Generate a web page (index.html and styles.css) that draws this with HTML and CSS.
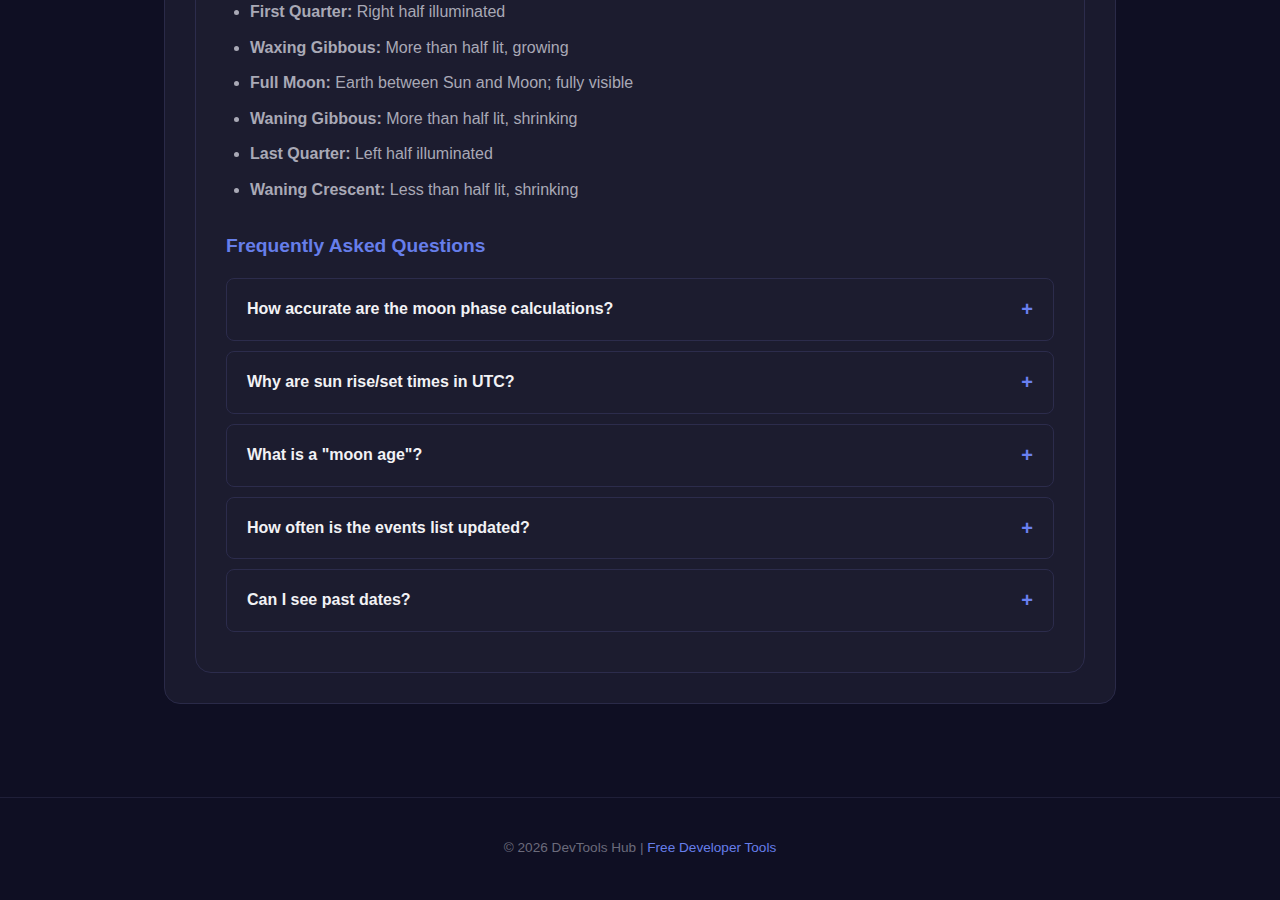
FILE: index.html
```html
<!DOCTYPE html>
<html lang="en">
<head>
<meta charset="utf-8">
<title>Moon Phase Calendar - DevTools Hub</title>
<link rel="stylesheet" href="styles.css">
</head>
<body>
<main class="page">
  <section class="tool-shell">
    <article class="info-card">
      <ul class="phase-list">
        <li><strong>First Quarter:</strong> Right half illuminated</li>
        <li><strong>Waxing Gibbous:</strong> More than half lit, growing</li>
        <li><strong>Full Moon:</strong> Earth between Sun and Moon; fully visible</li>
        <li><strong>Waning Gibbous:</strong> More than half lit, shrinking</li>
        <li><strong>Last Quarter:</strong> Left half illuminated</li>
        <li><strong>Waning Crescent:</strong> Less than half lit, shrinking</li>
      </ul>

      <h3 class="section-title">Frequently Asked Questions</h3>

      <div class="faq">
        <div class="faq-item"><span class="faq-q">How accurate are the moon phase calculations?</span><span class="faq-toggle">+</span></div>
        <div class="faq-item"><span class="faq-q">Why are sun rise/set times in UTC?</span><span class="faq-toggle">+</span></div>
        <div class="faq-item"><span class="faq-q">What is a "moon age"?</span><span class="faq-toggle">+</span></div>
        <div class="faq-item"><span class="faq-q">How often is the events list updated?</span><span class="faq-toggle">+</span></div>
        <div class="faq-item"><span class="faq-q">Can I see past dates?</span><span class="faq-toggle">+</span></div>
      </div>
    </article>
  </section>
</main>

<footer class="site-footer">
  <p>&copy; 2026 DevTools Hub | <a href="#">Free Developer Tools</a></p>
</footer>
</body>
</html>
```

FILE: styles.css
```css
* {
  box-sizing: border-box;
}

html, body {
  margin: 0;
  padding: 0;
}

body {
  background: #0f0f23;
  color: #a9a9b6;
  font-family: "Liberation Sans", Arial, sans-serif;
  font-size: 16px;
  line-height: 1.6;
}

/* page is scrolled to the lower part of the tool */
.page {
  max-width: 952px;
  margin: -63px auto 0;
  padding-bottom: 93px;
}

.tool-shell {
  background: #1a1a2e;
  border: 1px solid #2a2a48;
  border-radius: 16px;
  padding: 30px;
}

.info-card {
  background: #1c1c2f;
  border: 1px solid #2c2c4c;
  border-radius: 16px;
  padding: 30px;
}

.phase-list {
  margin: 0;
  padding-left: 24px;
}

.phase-list li {
  margin-bottom: 10px;
  color: #a9a9b6;
}

.phase-list strong {
  color: #a9a9b6;
}

.section-title {
  margin: 28px 0 17px;
  font-size: 19.2px;
  line-height: 1.6;
  color: #667eea;
  font-weight: 700;
}

.faq-item {
  display: flex;
  align-items: center;
  justify-content: space-between;
  border: 1px solid #2c2c4c;
  border-radius: 8px;
  padding: 20px;
  margin-bottom: 10px;
  background: #1c1c2f;
}

.faq-q {
  font-weight: 700;
  color: #f2f2f5;
  font-size: 16px;
  line-height: 20.8px;
}

.faq-toggle {
  color: #6a80f0;
  font-size: 20px;
  line-height: 20.8px;
  font-weight: 700;
}

.site-footer {
  border-top: 1px solid #1f1f38;
  padding: 40px 20px;
  text-align: center;
  font-size: 13.6px;
  line-height: 20px;
  color: #6b6b7b;
}

.site-footer p {
  margin: 0;
}

.site-footer a {
  color: #667eea;
  text-decoration: none;
}
```
